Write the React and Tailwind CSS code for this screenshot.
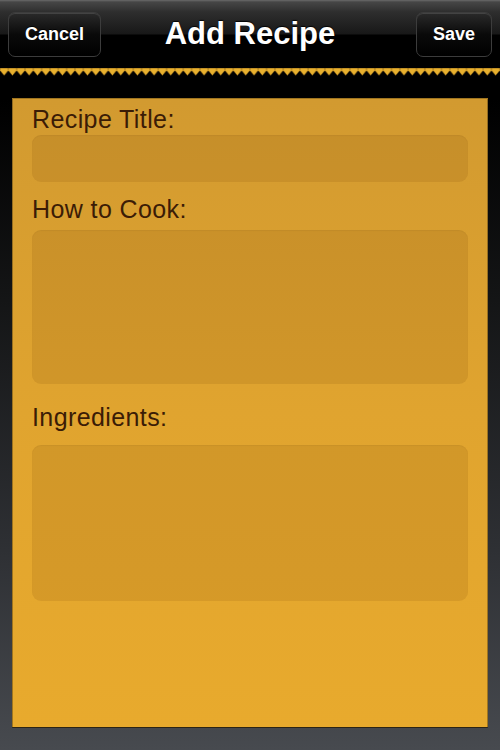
const fields = [
  { label: 'Recipe Title:', labelClass: 'mt-0', inputClass: 'mt-[2px] h-[47px]' },
  { label: 'How to Cook:', labelClass: 'mt-[13px]', inputClass: 'mt-[7px] h-[154px]' },
  { label: 'Ingredients:', labelClass: 'mt-[19px]', inputClass: 'mt-[14px] h-[156px]' },
];

function NavButton({ children, className }) {
  return (
    <button
      className={`flex h-[45px] items-center justify-center rounded-[7px] border border-[#3c3c3c] bg-[linear-gradient(to_bottom,#2a2a2a,#0a0a0a_50%,#000)] text-[18px] font-bold text-white shadow-[inset_0_1px_0_rgba(255,255,255,0.12)] [text-shadow:0_-1px_0_rgba(0,0,0,0.8)] ${className}`}
    >
      {children}
    </button>
  );
}

function Zigzag() {
  return (
    <svg className="block h-[9px] w-full" viewBox="0 0 500 9" preserveAspectRatio="none">
      <defs>
        <pattern id="teeth" width="8.33" height="9" patternUnits="userSpaceOnUse">
          <path d="M0 0 H8.33 V2.5 L4.16 7.5 L0 2.5 Z" fill="#e8b02e" stroke="#5a3c0a" strokeWidth="0.5" />
        </pattern>
      </defs>
      <rect width="500" height="9" fill="url(#teeth)" />
    </svg>
  );
}

export default function App() {
  return (
    <div
      className="flex h-[750px] w-[500px] flex-col overflow-hidden bg-[linear-gradient(to_bottom,#000_0px,#000_100px,#141516_300px,#2e3034_550px,#474a4f_750px)]"
      style={{ fontFamily: '"Liberation Sans", Arial, sans-serif' }}
    >
      <header className="grid h-[68px] grid-cols-[1fr_auto_1fr] items-center bg-[linear-gradient(to_bottom,#6a6a6a_0px,#464646_2px,#2e2e2e_12px,#181818_34px,#000_35px,#000)] px-[8px]">
        <NavButton className="w-[93px] justify-self-start">Cancel</NavButton>
        <h1 className="text-[31px] font-bold text-white [text-shadow:0_-1px_1px_rgba(0,0,0,0.9)]">Add Recipe</h1>
        <NavButton className="w-[76px] justify-self-end">Save</NavButton>
      </header>
      <Zigzag />

      <main className="mx-[12px] mt-[21px] flex h-[630px] flex-col border border-black/30 border-b-[#2c2414] bg-[linear-gradient(to_bottom,#d29a30,#e0a42f_50%,#e8aa2d)] px-[19px] pt-[6px]">
        {fields.map((f) => (
          <div key={f.label} className="flex flex-col">
            <label className={`h-[28px] text-[25px] leading-[28px] tracking-[0.4px] text-[#3b1c06] ${f.labelClass}`}>
              {f.label}
            </label>
            <div
              className={`rounded-[9px] bg-[#6a3d00]/[0.12] shadow-[inset_0_1px_1px_rgba(0,0,0,0.04)] ${f.inputClass}`}
            />
          </div>
        ))}
      </main>
    </div>
  );
}
